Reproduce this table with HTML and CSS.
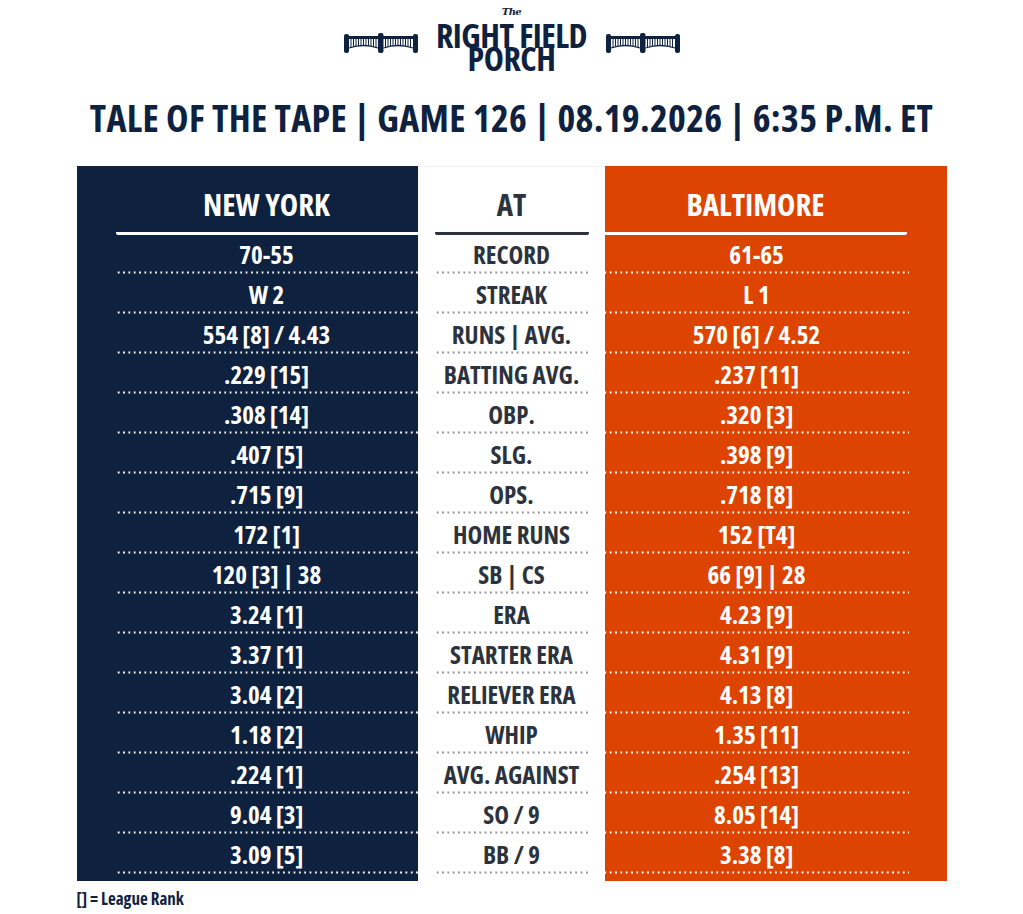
FILE: index.html
```html
<!DOCTYPE html>
<html>
<head>
<meta charset="utf-8">
<link rel="stylesheet" href="styles.css">
</head>
<body>
<svg class="defs" width="0" height="0">
  <defs>
    <g id="fence">
      <rect x="0" y="1" width="5" height="19" rx="2"/>
      <rect x="34" y="0" width="5.5" height="20" rx="2"/>
      <rect x="69" y="1" width="5" height="19" rx="2"/>
      <rect x="4" y="3" width="66" height="3"/>
      <g stroke="currentColor" stroke-width="1">
        <path d="M7 6V14.5M9.5 6V13.7M12 6V13M14.5 6V12.6M17 6V12.3M19.5 6V12.2M22 6V12.3M24.5 6V12.6M27 6V13M29.5 6V13.7M32 6V14.5"/>
        <path d="M41.5 6V14.5M44 6V13.7M46.5 6V13M49 6V12.6M51.5 6V12.3M54 6V12.2M56.5 6V12.3M59 6V12.6M61.5 6V13M64 6V13.7M66.5 6V14.5"/>
      </g>
      <path d="M5 15 Q19.5 10 34 15" stroke="currentColor" stroke-width="1.3" fill="none"/>
      <path d="M39.5 15 Q54 10 69 15" stroke="currentColor" stroke-width="1.3" fill="none"/>
    </g>
  </defs>
</svg>
<div class="page">
  <header class="logo">
    <svg class="fence" viewBox="0 0 74 20" width="74" height="20"><use href="#fence"/></svg>
    <div class="logo-name"><span class="logo-the">The</span><br>RIGHT FIELD<br>PORCH</div>
    <svg class="fence" viewBox="0 0 74 20" width="74" height="20"><use href="#fence"/></svg>
  </header>
  <h1 class="title">TALE OF THE TAPE | GAME 126 | 08.19.2026 | 6:35 P.M. ET</h1>
  <div class="tape">
    <div class="col col-ny">
      <div class="head">NEW YORK</div>
      <div class="cell">70-55</div>
      <div class="cell">W 2</div>
      <div class="cell">554 [8] / 4.43</div>
      <div class="cell">.229 [15]</div>
      <div class="cell">.308 [14]</div>
      <div class="cell">.407 [5]</div>
      <div class="cell">.715 [9]</div>
      <div class="cell">172 [1]</div>
      <div class="cell">120 [3] | 38</div>
      <div class="cell">3.24 [1]</div>
      <div class="cell">3.37 [1]</div>
      <div class="cell">3.04 [2]</div>
      <div class="cell">1.18 [2]</div>
      <div class="cell">.224 [1]</div>
      <div class="cell">9.04 [3]</div>
      <div class="cell">3.09 [5]</div>
    </div>
    <div class="col col-mid">
      <div class="head">AT</div>
      <div class="cell">RECORD</div>
      <div class="cell">STREAK</div>
      <div class="cell">RUNS | AVG.</div>
      <div class="cell">BATTING AVG.</div>
      <div class="cell">OBP.</div>
      <div class="cell">SLG.</div>
      <div class="cell">OPS.</div>
      <div class="cell">HOME RUNS</div>
      <div class="cell">SB | CS</div>
      <div class="cell">ERA</div>
      <div class="cell">STARTER ERA</div>
      <div class="cell">RELIEVER ERA</div>
      <div class="cell">WHIP</div>
      <div class="cell">AVG. AGAINST</div>
      <div class="cell">SO / 9</div>
      <div class="cell">BB / 9</div>
    </div>
    <div class="col col-bal">
      <div class="head">BALTIMORE</div>
      <div class="cell">61-65</div>
      <div class="cell">L 1</div>
      <div class="cell">570 [6] / 4.52</div>
      <div class="cell">.237 [11]</div>
      <div class="cell">.320 [3]</div>
      <div class="cell">.398 [9]</div>
      <div class="cell">.718 [8]</div>
      <div class="cell">152 [T4]</div>
      <div class="cell">66 [9] | 28</div>
      <div class="cell">4.23 [9]</div>
      <div class="cell">4.31 [9]</div>
      <div class="cell">4.13 [8]</div>
      <div class="cell">1.35 [11]</div>
      <div class="cell">.254 [13]</div>
      <div class="cell">8.05 [14]</div>
      <div class="cell">3.38 [8]</div>
    </div>
  </div>
  <div class="note">[] = League Rank</div>
</div>
</body>
</html>
```
FILE: styles.css
```css
* { box-sizing: border-box; }
body {
  margin: 0;
  background: #ffffff;
  font-family: "Open Sans", "Roboto", "Liberation Sans", sans-serif;
  font-stretch: 75%;
  font-weight: 700;
  color: #0e2240;
}
.defs { position: absolute; width: 0; height: 0; }
.page {
  width: 870px;
  margin: 0 auto;
  padding-top: 1px;
}
.logo {
  display: flex;
  justify-content: center;
  align-items: flex-start;
  gap: 14px;
  height: 73px;
}
.fence { display: block; margin-top: 32px; color: #0e2240; fill: #0e2240; }
.logo-name {
  width: 160px;
  text-align: center;
  font-size: 34px;
  line-height: 23px;
  letter-spacing: -0.5px;
}
.logo-the {
  font-family: "DejaVu Serif", serif;
  font-stretch: normal;
  font-style: italic;
  font-size: 10px;
  line-height: 0;
  letter-spacing: -0.6px;
  vertical-align: 10px;
}
.title {
  margin: 23px 0 29px;
  text-align: center;
  font-size: 38px;
  line-height: 40px;
  font-weight: 700;
  letter-spacing: 0.3px;
  color: #0e2240;
  white-space: nowrap;
}
.tape {
  display: grid;
  grid-template-columns: 341px 187px 342px;
  height: 715px;
}
.col {
  display: flex;
  flex-direction: column;
  padding-bottom: 6px;
}
.col-ny { background: #0e2240; color: #ffffff; padding-left: 39px; }
.col-mid { background: #ffffff; color: #2d333d; padding-left: 17px; padding-right: 16px; box-shadow: inset 0 1px 0 #f0f0f0; }
.col-bal { background: #dd4401; color: #ffffff; padding-right: 40px; }
.head {
  height: 69px;
  padding-top: 21px;
  text-align: center;
  font-size: 31px;
  line-height: 34px;
  border-bottom: 3px solid #ffffff;
}
.col-ny .head { border-bottom-left-radius: 2px; }
.col-bal .head { border-bottom-right-radius: 2px; }
.col-mid .head { border-bottom-color: #2d333d; border-radius: 0 0 2px 2px; }
.cell {
  height: 40px;
  padding-top: 6px;
  text-align: center;
  font-size: 25px;
  line-height: 26px;
  white-space: nowrap;
  background-size: 5.33px 3px;
  background-repeat: repeat-x;
  background-position: 0 36px;
}
.col-ny .cell, .col-bal .cell { background-image: radial-gradient(circle, #ffffff 0.9px, transparent 1.3px); }
.col-bal .cell { background-position: 3px 36px; margin-right: -2px; }
.col-mid .cell { background-image: radial-gradient(circle, #8a8e94 0.9px, transparent 1.3px); }
.note {
  padding-top: 8px;
  font-size: 17px;
  line-height: 20px;
  color: #0e2240;
}
```
